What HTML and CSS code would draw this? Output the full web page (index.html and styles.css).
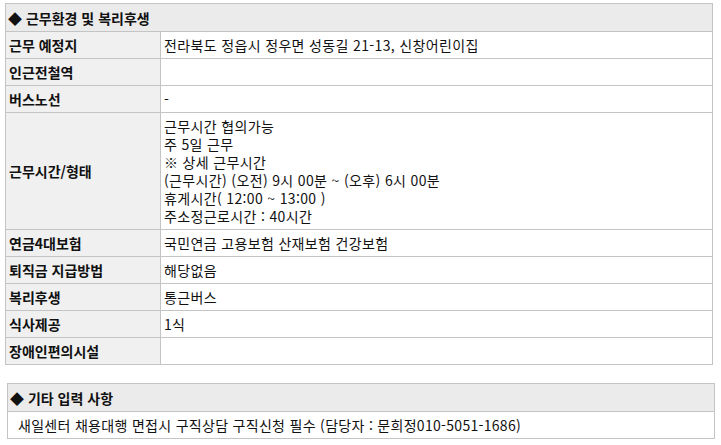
FILE: index.html
```html
<!DOCTYPE html>
<html lang="ko">
<head>
<meta charset="utf-8">
<link rel="stylesheet" href="styles.css">
</head>
<body>
<div class="page">
  <table class="info main">
    <colgroup><col class="col-label"><col class="col-value"></colgroup>
    <tr><th colspan="2" class="head">◆ 근무환경 및 복리후생</th></tr>
    <tr><th class="label">근무 예정지</th><td>전라북도 정읍시 정우면 성동길 21-13, 신창어린이집</td></tr>
    <tr><th class="label">인근전철역</th><td></td></tr>
    <tr><th class="label">버스노선</th><td>-</td></tr>
    <tr><th class="label">근무시간/형태</th><td>근무시간 협의가능<br>주 5일 근무<br>※ 상세 근무시간<br>(근무시간) (오전) 9시 00분 ~ (오후) 6시 00분<br>휴게시간( 12:00 ~ 13:00 )<br>주소정근로시간 : 40시간</td></tr>
    <tr><th class="label">연금4대보험</th><td>국민연금 고용보험 산재보험 건강보험</td></tr>
    <tr><th class="label">퇴직금 지급방법</th><td>해당없음</td></tr>
    <tr><th class="label">복리후생</th><td>통근버스</td></tr>
    <tr><th class="label">식사제공</th><td>1식</td></tr>
    <tr><th class="label">장애인편의시설</th><td></td></tr>
  </table>
  <table class="info extra">
    <tr><th class="head">◆ 기타 입력 사항</th></tr>
    <tr><td class="note">새일센터 채용대행 면접시 구직상담 구직신청 필수 (담당자 : 문희정010-5051-1686)</td></tr>
  </table>
</div>
</body>
</html>
```
FILE: styles.css
```css
html, body {
  margin: 0;
  padding: 0;
  background: #ffffff;
}
body {
  font-family: "Noto Sans CJK KR", "Noto Sans", sans-serif;
  font-size: 14px;
  color: #111111;
}
.page {
  padding-top: 3px;
}
.info {
  border-collapse: collapse;
  width: 708px;
  table-layout: fixed;
}
.col-label {
  width: 155px;
}
.main {
  margin-left: 5px;
}
.extra {
  margin-left: 7px;
  margin-top: 18px;
}
.info th, .info td {
  border: 1px solid #c4c4c4;
  text-align: left;
  vertical-align: middle;
  line-height: 18px;
  padding: 4px 3px;
}
.info td {
  letter-spacing: 0.35px;
}
.info th {
  font-weight: bold;
}
.info .head {
  background: #ebebeb;
  height: 18px;
  padding: 5px 2px 4px;
}
.info .label {
  background: #f0f0f0;
}
.info .note {
  padding: 4px 10px;
  letter-spacing: 0.3px;
}
```
